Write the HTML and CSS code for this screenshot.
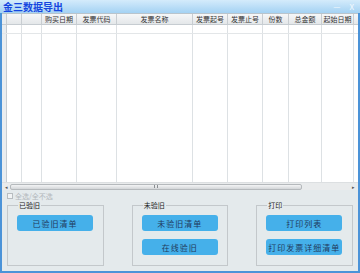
FILE: index.html
```html
<!DOCTYPE html>
<html lang="zh-CN">
<head>
    <meta charset="UTF-8">
    <title>金三数据导出</title>
    <link rel="stylesheet" href="styles.css">
</head>
<body>
    <div class="window">
        <div class="titlebar">
            <span class="title">金三数据导出</span>
            <span class="win-btns"><span class="min">—</span><span class="close">X</span></span>
        </div>

        <div class="grid">
            <div class="grid-row grid-head">
                <div class="cell rowhead"></div>
                <div class="cell"></div>
                <div class="cell"></div>
                <div class="cell">购买日期</div>
                <div class="cell">发票代码</div>
                <div class="cell">发票名称</div>
                <div class="cell">发票起号</div>
                <div class="cell">发票止号</div>
                <div class="cell">份数</div>
                <div class="cell">总金额</div>
                <div class="cell">起始日期</div>
                <div class="cell tail"></div>
            </div>
            <div class="grid-row grid-line">
                <div class="cell rowhead"></div>
                <div class="cell"></div><div class="cell"></div><div class="cell"></div>
                <div class="cell"></div><div class="cell"></div><div class="cell"></div>
                <div class="cell"></div><div class="cell"></div><div class="cell"></div>
                <div class="cell"></div><div class="cell tail"></div>
            </div>
            <div class="grid-row grid-fill">
                <div class="cell rowhead"></div>
                <div class="cell"></div><div class="cell"></div><div class="cell"></div>
                <div class="cell"></div><div class="cell"></div><div class="cell"></div>
                <div class="cell"></div><div class="cell"></div><div class="cell"></div>
                <div class="cell"></div><div class="cell tail"></div>
            </div>
            <div class="hscroll">
                <span class="arrow">◂</span>
                <div class="track">
                    <div class="thumb"><span class="grip"></span></div>
                </div>
                <span class="arrow">▸</span>
            </div>
        </div>

        <div class="panel">
            <label class="check-all"><span class="box"></span>全选/全不选</label>
            <div class="groups">
                <fieldset class="group">
                    <legend>已验旧</legend>
                    <button>已验旧清单</button>
                </fieldset>
                <fieldset class="group">
                    <legend>未验旧</legend>
                    <button>未验旧清单</button>
                    <button>在线验旧</button>
                </fieldset>
                <fieldset class="group">
                    <legend>打印</legend>
                    <button>打印列表</button>
                    <button>打印发票详细清单</button>
                </fieldset>
            </div>
        </div>
    </div>
</body>
</html>
```
FILE: styles.css
```css
* { box-sizing: border-box; }
body {
    margin: 0;
    font-family: "Noto Sans CJK SC", "Liberation Sans", sans-serif;
    background: #ffffff;
}
.window {
    width: 360px;
    height: 273px;
    display: flex;
    flex-direction: column;
    border: 2px solid #4b93d8;
    border-top: none;
    background: #e4eaec;
}
.titlebar {
    height: 13px;
    flex: none;
    display: flex;
    align-items: center;
    justify-content: space-between;
    margin: 0 -2px;
    padding: 0 6px 0 3px;
    background: linear-gradient(#d4ebfb, #a4d2f3);
}
.title {
    color: #1546e0;
    font-size: 10px;
    font-weight: bold;
    line-height: 13px;
}
.win-btns {
    display: flex;
    gap: 9px;
    color: #f4f9fd;
    font-size: 8px;
    line-height: 13px;
}
.grid {
    height: 177px;
    flex: none;
    display: flex;
    flex-direction: column;
    background: #ffffff;
    border-top: 1px solid #b9c4cc;
}
.grid-row {
    display: grid;
    grid-template-columns: 5px 15px 20px 35px 40px 76px 35px 35px 26px 33px 32px 1fr;
}
.cell {
    border-right: 1px solid #dde1e4;
    font-size: 7px;
    color: #333;
    text-align: center;
    line-height: 10px;
    white-space: nowrap;
    overflow: hidden;
}
.cell.tail { border-right: none; }
.cell.rowhead { background: #e9edf0; border-right-color: #c6ccd1; }
.grid-head {
    height: 11px;
    background: linear-gradient(#f6f7f8, #e4e7e9);
    border-bottom: 1px solid #c6ccd1;
}
.grid-head .cell { border-right-color: #c8cdd1; }
.grid-line {
    height: 9px;
    border-bottom: 1px solid #e3e6e8;
}
.grid-fill { flex: 1; }
.hscroll {
    height: 8px;
    flex: none;
    display: flex;
    align-items: center;
    background: #e9ebec;
    border-top: 1px solid #dcdfe1;
    padding: 0 1px;
}
.arrow {
    width: 7px;
    font-size: 5px;
    color: #555;
    text-align: center;
    line-height: 7px;
}
.track { flex: 1; height: 6px; }
.thumb {
    width: 292px;
    height: 6px;
    border: 1px solid #b5b9bc;
    border-radius: 2px;
    background: linear-gradient(#f3f4f5, #d3d6d8);
    display: flex;
    align-items: center;
    justify-content: center;
}
.grip {
    width: 4px;
    height: 3px;
    border-left: 1px solid #8a8e91;
    border-right: 1px solid #8a8e91;
}
.panel {
    flex: 1;
    padding: 2px 5px 0 5px;
}
.check-all {
    display: flex;
    align-items: center;
    gap: 2px;
    height: 8px;
    font-size: 7px;
    color: #b3b8bc;
}
.box {
    width: 6px;
    height: 6px;
    border: 1px solid #b8bdc0;
    background: #f2f4f5;
}
.groups {
    display: flex;
    gap: 28px;
    margin-top: 1px;
}
.group {
    width: 97px;
    height: 65px;
    margin: 0;
    padding: 6px 0 0 9px;
    border: 1px solid #c3c8cb;
    display: flex;
    flex-direction: column;
    gap: 8px;
}
.group legend {
    padding: 0 1px;
    margin-left: 1px;
    font-size: 7px;
    line-height: 8px;
    color: #222;
}
.group button {
    width: 76px;
    height: 16px;
    padding: 0;
    border: none;
    border-radius: 3px;
    background: #45b0ea;
    color: #213a5c;
    font-family: "Noto Sans CJK SC", sans-serif;
    font-size: 8px;
    letter-spacing: 1px;
}
```
